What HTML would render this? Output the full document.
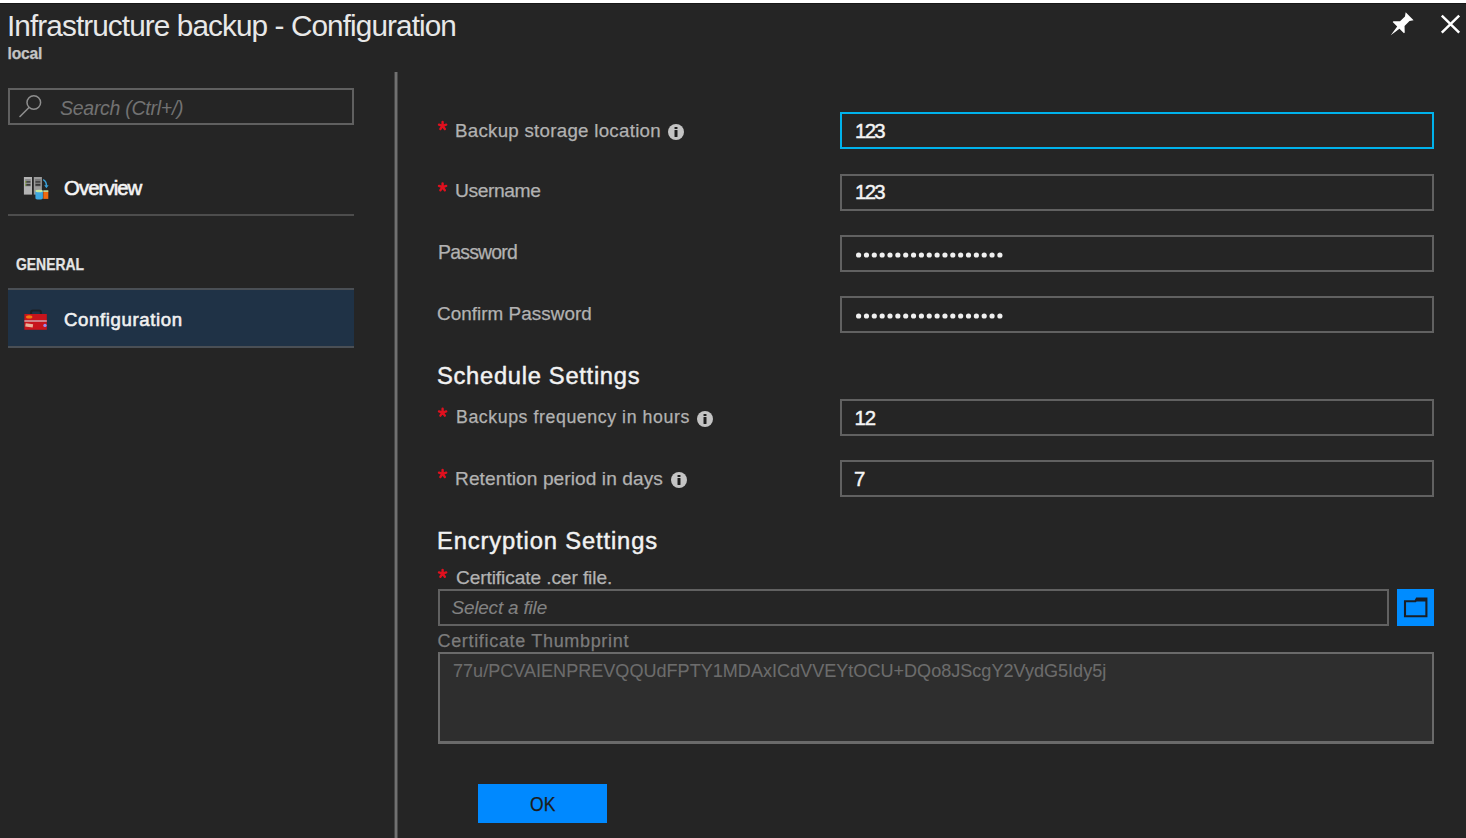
<!DOCTYPE html>
<html><head><meta charset="utf-8"><style>
html,body{margin:0;padding:0;}
body{width:1466px;height:838px;background:#252525;position:relative;overflow:hidden;font-family:"Liberation Sans", sans-serif;}
.b{position:absolute;display:block;}
.t{position:absolute;white-space:nowrap;}
.star{position:absolute;color:#e5111d;font-size:22px;line-height:22px;font-weight:400;}
</style></head><body>
<div class="b" style="left:0px;top:0px;width:1466px;height:3px;background:#ffffff;"></div>
<div class="b" style="left:0px;top:3px;width:1466px;height:1px;background:#181818;"></div>
<div class="b" style="left:8px;top:88px;width:342px;height:33px;border:2px solid #606060;background:transparent;"></div>
<svg class="b" style="left:16px;top:92px" width="26" height="30" viewBox="0 0 26 30"><circle cx="17.8" cy="10.5" r="6.8" fill="none" stroke="#8e8e8e" stroke-width="1.5"/><line x1="13" y1="15.5" x2="4" y2="24.5" stroke="#8e8e8e" stroke-width="1.6" stroke-linecap="round"/></svg>
<svg class="b" style="left:22px;top:175px" width="28" height="26" viewBox="0 0 28 26"><rect x="1.9" y="2" width="8.1" height="17.6" fill="#b4b4b4"/><rect x="3.2" y="4" width="5.6" height="7.4" fill="#8c8c8c"/><rect x="3.6" y="6.2" width="4.8" height="1.4" fill="#3a3a3a"/><rect x="3.6" y="9.2" width="4.8" height="1.4" fill="#2a2a2a"/><rect x="3.2" y="6.2" width="1.2" height="1.4" fill="#8fb43a"/><rect x="3.2" y="9.2" width="1.2" height="1.4" fill="#8fb43a"/><rect x="11.8" y="2" width="8.1" height="17.6" fill="#9a9a9a"/><rect x="13.1" y="4" width="5.6" height="7.4" fill="#7a7a7a"/><rect x="13.5" y="6.2" width="4.8" height="1.4" fill="#3a3a3a"/><rect x="13.5" y="9.2" width="4.8" height="1.4" fill="#2a2a2a"/><path d="M21.2 4.6 Q24.6 6.2 24.4 11.2" stroke="#3aa0d8" stroke-width="1.5" fill="none"/><path d="M22.2 10.2 L24.4 13.2 L26.6 10.2 Z" fill="#3aa0d8"/><path d="M13.4 16 V23 Q13.4 24.6 17.15 24.6 Q20.9 24.6 20.9 23 V16 Z" fill="#3ea8e0"/><ellipse cx="17.15" cy="16" rx="3.75" ry="1.3" fill="#c8e8a0"/><rect x="21.3" y="16.3" width="5" height="7.6" fill="#f06a10"/><rect x="21.3" y="15.3" width="5" height="1.6" fill="#c8e0a0"/></svg>
<div class="b" style="left:8px;top:214px;width:346px;height:2px;background:#4d4d4d;"></div>
<div class="b" style="left:8px;top:288px;width:346px;height:60px;background:#1f3246;border-top:2px solid #4a4f55;border-bottom:2px solid #4a4f55;box-sizing:border-box"></div>
<svg class="b" style="left:22px;top:306px" width="28" height="26" viewBox="0 0 28 26"><path d="M9.1 8 V6 Q9.1 4.4 11 4.4 H17 Q18.9 4.4 18.9 6 V8" stroke="#1c2026" stroke-width="2" fill="none"/><rect x="2.4" y="8" width="22.4" height="15.8" fill="#c8141c"/><rect x="2.4" y="14" width="22.4" height="2" fill="#d08088"/><ellipse cx="7.2" cy="10.9" rx="3.2" ry="1.7" fill="#f07a10"/><rect x="3.5" y="17.6" width="7.5" height="3.4" fill="#e8b098" transform="rotate(8 7 19)"/><circle cx="23" cy="19.4" r="1.7" fill="#9c8cf0"/></svg>
<div class="b" style="left:394px;top:72px;width:4px;height:766px;background:linear-gradient(90deg,#454545 0,#454545 1px,#717171 1px,#717171 3px,#494949 3px);"></div>
<div class="b" style="left:840px;top:112px;width:590px;height:33px;border:2px solid #00b2ec;background:transparent;"></div>
<div class="b" style="left:840px;top:174px;width:590px;height:33px;border:2px solid #616161;background:transparent;"></div>
<div class="b" style="left:840px;top:235px;width:590px;height:33px;border:2px solid #616161;background:transparent;"></div>
<div class="b" style="left:840px;top:296px;width:590px;height:33px;border:2px solid #616161;background:transparent;"></div>
<div class="b" style="left:840px;top:399px;width:590px;height:33px;border:2px solid #616161;background:transparent;"></div>
<div class="b" style="left:840px;top:460px;width:590px;height:33px;border:2px solid #616161;background:transparent;"></div>
<svg class="b" style="left:855px;top:252px" width="150" height="6"><circle cx="3.60" cy="3" r="2.6" fill="#f0f0f0"/><circle cx="11.45" cy="3" r="2.6" fill="#f0f0f0"/><circle cx="19.30" cy="3" r="2.6" fill="#f0f0f0"/><circle cx="27.15" cy="3" r="2.6" fill="#f0f0f0"/><circle cx="35.00" cy="3" r="2.6" fill="#f0f0f0"/><circle cx="42.85" cy="3" r="2.6" fill="#f0f0f0"/><circle cx="50.70" cy="3" r="2.6" fill="#f0f0f0"/><circle cx="58.55" cy="3" r="2.6" fill="#f0f0f0"/><circle cx="66.40" cy="3" r="2.6" fill="#f0f0f0"/><circle cx="74.25" cy="3" r="2.6" fill="#f0f0f0"/><circle cx="82.10" cy="3" r="2.6" fill="#f0f0f0"/><circle cx="89.95" cy="3" r="2.6" fill="#f0f0f0"/><circle cx="97.80" cy="3" r="2.6" fill="#f0f0f0"/><circle cx="105.65" cy="3" r="2.6" fill="#f0f0f0"/><circle cx="113.50" cy="3" r="2.6" fill="#f0f0f0"/><circle cx="121.35" cy="3" r="2.6" fill="#f0f0f0"/><circle cx="129.20" cy="3" r="2.6" fill="#f0f0f0"/><circle cx="137.05" cy="3" r="2.6" fill="#f0f0f0"/><circle cx="144.90" cy="3" r="2.6" fill="#f0f0f0"/></svg>
<svg class="b" style="left:855px;top:313px" width="150" height="6"><circle cx="3.60" cy="3" r="2.6" fill="#f0f0f0"/><circle cx="11.45" cy="3" r="2.6" fill="#f0f0f0"/><circle cx="19.30" cy="3" r="2.6" fill="#f0f0f0"/><circle cx="27.15" cy="3" r="2.6" fill="#f0f0f0"/><circle cx="35.00" cy="3" r="2.6" fill="#f0f0f0"/><circle cx="42.85" cy="3" r="2.6" fill="#f0f0f0"/><circle cx="50.70" cy="3" r="2.6" fill="#f0f0f0"/><circle cx="58.55" cy="3" r="2.6" fill="#f0f0f0"/><circle cx="66.40" cy="3" r="2.6" fill="#f0f0f0"/><circle cx="74.25" cy="3" r="2.6" fill="#f0f0f0"/><circle cx="82.10" cy="3" r="2.6" fill="#f0f0f0"/><circle cx="89.95" cy="3" r="2.6" fill="#f0f0f0"/><circle cx="97.80" cy="3" r="2.6" fill="#f0f0f0"/><circle cx="105.65" cy="3" r="2.6" fill="#f0f0f0"/><circle cx="113.50" cy="3" r="2.6" fill="#f0f0f0"/><circle cx="121.35" cy="3" r="2.6" fill="#f0f0f0"/><circle cx="129.20" cy="3" r="2.6" fill="#f0f0f0"/><circle cx="137.05" cy="3" r="2.6" fill="#f0f0f0"/><circle cx="144.90" cy="3" r="2.6" fill="#f0f0f0"/></svg>
<div class="b" style="left:438px;top:589px;width:947px;height:33px;border:2px solid #616161;background:transparent;"></div>
<div class="b" style="left:1397px;top:589px;width:37px;height:37px;background:#008cff;"></div>
<svg class="b" style="left:1397px;top:589px" width="37" height="37" viewBox="0 0 37 37"><path d="M8,12.2 H18.3 L19.8,9.6 H29.4 V27.3 H8 Z" fill="none" stroke="#1a1f26" stroke-width="2.1" stroke-linejoin="miter"/><path d="M18.3,12.2 L19.8,9.6 H29.4 V12.6 H18.3 Z" fill="#1a1f26"/></svg>
<div class="b" style="left:438px;top:652px;width:992px;height:87px;border:2px solid #6a6a6a;background:#2e2e2e;border-bottom-width:3px"></div>
<div class="b" style="left:478px;top:784px;width:129px;height:39px;background:#0089ff;"></div>
<svg class="b" style="left:0;top:0;overflow:visible" width="1" height="1"><path d="M442.60,125.85 L442.60,122.05 M442.60,125.85 L446.21,124.68 M442.60,125.85 L444.83,128.92 M442.60,125.85 L440.37,128.92 M442.60,125.85 L438.99,124.68 " stroke="#e0101e" stroke-width="2.4" stroke-linecap="round"/></svg>
<svg class="b" style="left:0;top:0;overflow:visible" width="1" height="1"><path d="M442.60,187.15 L442.60,183.35 M442.60,187.15 L446.21,185.98 M442.60,187.15 L444.83,190.22 M442.60,187.15 L440.37,190.22 M442.60,187.15 L438.99,185.98 " stroke="#e0101e" stroke-width="2.4" stroke-linecap="round"/></svg>
<svg class="b" style="left:0;top:0;overflow:visible" width="1" height="1"><path d="M442.60,412.55 L442.60,408.75 M442.60,412.55 L446.21,411.38 M442.60,412.55 L444.83,415.62 M442.60,412.55 L440.37,415.62 M442.60,412.55 L438.99,411.38 " stroke="#e0101e" stroke-width="2.4" stroke-linecap="round"/></svg>
<svg class="b" style="left:0;top:0;overflow:visible" width="1" height="1"><path d="M442.60,473.85 L442.60,470.05 M442.60,473.85 L446.21,472.68 M442.60,473.85 L444.83,476.92 M442.60,473.85 L440.37,476.92 M442.60,473.85 L438.99,472.68 " stroke="#e0101e" stroke-width="2.4" stroke-linecap="round"/></svg>
<svg class="b" style="left:0;top:0;overflow:visible" width="1" height="1"><path d="M442.60,573.65 L442.60,569.85 M442.60,573.65 L446.21,572.48 M442.60,573.65 L444.83,576.72 M442.60,573.65 L440.37,576.72 M442.60,573.65 L438.99,572.48 " stroke="#e0101e" stroke-width="2.4" stroke-linecap="round"/></svg>
<svg class="b" style="left:667.9px;top:123.80000000000001px" width="16" height="16" viewBox="0 0 16 16"><circle cx="8" cy="8" r="8" fill="#c4c4c4"/><rect x="6.4" y="3.0" width="3.2" height="1.9" rx="0.7" fill="#1e1e1e"/><rect x="6.5" y="6.0" width="3.0" height="6.9" rx="0.3" fill="#1e1e1e"/></svg>
<svg class="b" style="left:696.9px;top:410.5px" width="16" height="16" viewBox="0 0 16 16"><circle cx="8" cy="8" r="8" fill="#c4c4c4"/><rect x="6.4" y="3.0" width="3.2" height="1.9" rx="0.7" fill="#1e1e1e"/><rect x="6.5" y="6.0" width="3.0" height="6.9" rx="0.3" fill="#1e1e1e"/></svg>
<svg class="b" style="left:671.05px;top:471.75px" width="16" height="16" viewBox="0 0 16 16"><circle cx="8" cy="8" r="8" fill="#c4c4c4"/><rect x="6.4" y="3.0" width="3.2" height="1.9" rx="0.7" fill="#1e1e1e"/><rect x="6.5" y="6.0" width="3.0" height="6.9" rx="0.3" fill="#1e1e1e"/></svg>
<svg class="b" style="left:1380px;top:5px" width="86" height="40" viewBox="1380 5 86 40"><g transform="translate(1399.1,26.8) rotate(45)"><path d="M-5.6,-14.9 L5.6,-14.9 L3.2,-11.5 L3.2,-4.5 L8,0 L8,1.1 L1.6,1.1 L0,11.8 L-1.6,1.1 L-8,1.1 L-8,0 L-3.2,-4.5 L-3.2,-11.5 Z" fill="#ffffff"/></g><path d="M1441.8,15.6 L1459.2,32.6 M1459.2,15.6 L1441.8,32.6" stroke="#ffffff" stroke-width="2.5"/></svg>
<div id="t_title" class="t" style="left:7.00px;top:6.56px;font-size:29.75px;line-height:38.67px;letter-spacing:-0.917px;color:#e8e8e8;font-weight:400;font-style:normal;-webkit-text-stroke:0.0px #e8e8e8">Infrastructure backup - Configuration</div>
<div id="t_local" class="t" style="left:7.50px;top:44.17px;font-size:15.64px;line-height:20.34px;letter-spacing:-0.200px;color:#c4c4c4;font-weight:700;font-style:normal;-webkit-text-stroke:0.25px #c4c4c4">local</div>
<div id="t_search" class="t" style="left:60.00px;top:95.65px;font-size:19.55px;line-height:25.42px;letter-spacing:-0.286px;color:#727272;font-weight:400;font-style:italic;-webkit-text-stroke:0.0px #727272">Search (Ctrl+/)</div>
<div id="t_overview" class="t" style="left:64.00px;top:174.56px;font-size:20.39px;line-height:26.51px;letter-spacing:-0.943px;color:#f4f4f4;font-weight:400;font-style:normal;-webkit-text-stroke:0.6px #f4f4f4">Overview</div>
<div id="t_general" class="t" style="transform:scaleX(0.8671);transform-origin:0 0;left:16.00px;top:254.49px;font-size:16.06px;line-height:20.88px;letter-spacing:0.000px;color:#e4e4e4;font-weight:700;font-style:normal;-webkit-text-stroke:0.25px #e4e4e4">GENERAL</div>
<div id="t_config" class="t" style="left:64.00px;top:308.19px;font-size:18.58px;line-height:24.15px;letter-spacing:0.633px;color:#f0f0f0;font-weight:400;font-style:normal;-webkit-text-stroke:0.6px #f0f0f0">Configuration</div>
<div id="t_l1" class="t" style="left:455.00px;top:118.61px;font-size:18.72px;line-height:24.33px;letter-spacing:0.273px;color:#b2b2b2;font-weight:400;font-style:normal;-webkit-text-stroke:0.25px #b2b2b2">Backup storage location</div>
<div id="t_l2" class="t" style="left:455.00px;top:178.29px;font-size:19.27px;line-height:25.06px;letter-spacing:-0.429px;color:#b2b2b2;font-weight:400;font-style:normal;-webkit-text-stroke:0.25px #b2b2b2">Username</div>
<div id="t_l3" class="t" style="left:438.00px;top:240.41px;font-size:19.41px;line-height:25.24px;letter-spacing:-0.771px;color:#b2b2b2;font-weight:400;font-style:normal;-webkit-text-stroke:0.25px #b2b2b2">Password</div>
<div id="t_l4" class="t" style="left:437.00px;top:301.91px;font-size:18.85px;line-height:24.51px;letter-spacing:0.053px;color:#b2b2b2;font-weight:400;font-style:normal;-webkit-text-stroke:0.25px #b2b2b2">Confirm Password</div>
<div id="t_h1" class="t" style="left:437.00px;top:361.48px;font-size:23.74px;line-height:30.87px;letter-spacing:0.700px;color:#f2f2f2;font-weight:400;font-style:normal;-webkit-text-stroke:0.45px #f2f2f2">Schedule Settings</div>
<div id="t_l5" class="t" style="left:456.00px;top:405.52px;font-size:17.74px;line-height:23.06px;letter-spacing:0.576px;color:#b2b2b2;font-weight:400;font-style:normal;-webkit-text-stroke:0.25px #b2b2b2">Backups frequency in hours</div>
<div id="t_l6" class="t" style="left:455.00px;top:466.90px;font-size:19.13px;line-height:24.87px;letter-spacing:0.078px;color:#b2b2b2;font-weight:400;font-style:normal;-webkit-text-stroke:0.25px #b2b2b2">Retention period in days</div>
<div id="t_h2" class="t" style="left:437.00px;top:525.60px;font-size:23.74px;line-height:30.87px;letter-spacing:0.867px;color:#f2f2f2;font-weight:400;font-style:normal;-webkit-text-stroke:0.45px #f2f2f2">Encryption Settings</div>
<div id="t_l7" class="t" style="left:456.00px;top:566.08px;font-size:19.13px;line-height:24.87px;letter-spacing:-0.095px;color:#b2b2b2;font-weight:400;font-style:normal;-webkit-text-stroke:0.25px #b2b2b2">Certificate .cer file.</div>
<div id="t_sel" class="t" style="left:451.50px;top:596.41px;font-size:18.85px;line-height:24.51px;letter-spacing:-0.150px;color:#828282;font-weight:400;font-style:italic;-webkit-text-stroke:0.1px #828282">Select a file</div>
<div id="t_l8" class="t" style="left:437.50px;top:629.51px;font-size:18.02px;line-height:23.42px;letter-spacing:0.667px;color:#7c7c7c;font-weight:400;font-style:normal;-webkit-text-stroke:0.25px #7c7c7c">Certificate Thumbprint</div>
<div id="t_thumb" class="t" style="transform:scaleX(0.9379);transform-origin:0 0;left:453.00px;top:658.29px;font-size:19.27px;line-height:25.06px;letter-spacing:0.000px;color:#6c6c6c;font-weight:400;font-style:normal;-webkit-text-stroke:0.1px #6c6c6c">77u/PCVAIENPREVQQUdFPTY1MDAxICdVVEYtOCU+DQo8JScgY2VydG5Idy5j</div>
<div id="t_v1" class="t" style="left:855.00px;top:118.42px;font-size:20.39px;line-height:26.51px;letter-spacing:-1.700px;color:#f4f4f4;font-weight:400;font-style:normal;-webkit-text-stroke:0.45px #f4f4f4">123</div>
<div id="t_v2" class="t" style="left:855.00px;top:178.92px;font-size:20.39px;line-height:26.51px;letter-spacing:-1.700px;color:#f4f4f4;font-weight:400;font-style:normal;-webkit-text-stroke:0.45px #f4f4f4">123</div>
<div id="t_v5" class="t" style="left:854.50px;top:404.68px;font-size:20.39px;line-height:26.51px;letter-spacing:-1.000px;color:#f4f4f4;font-weight:400;font-style:normal;-webkit-text-stroke:0.45px #f4f4f4">12</div>
<div id="t_v6" class="t" style="left:854.00px;top:465.68px;font-size:20.39px;line-height:26.51px;letter-spacing:2.200px;color:#f4f4f4;font-weight:400;font-style:normal;-webkit-text-stroke:0.45px #f4f4f4">7</div>
<div id="t_ok" class="t" style="transform:scaleX(0.8980);transform-origin:0 0;left:530.00px;top:791.51px;font-size:19.55px;line-height:25.42px;letter-spacing:0.000px;color:#1c1c1c;font-weight:400;font-style:normal;-webkit-text-stroke:0.25px #1c1c1c">OK</div>
</body></html>
